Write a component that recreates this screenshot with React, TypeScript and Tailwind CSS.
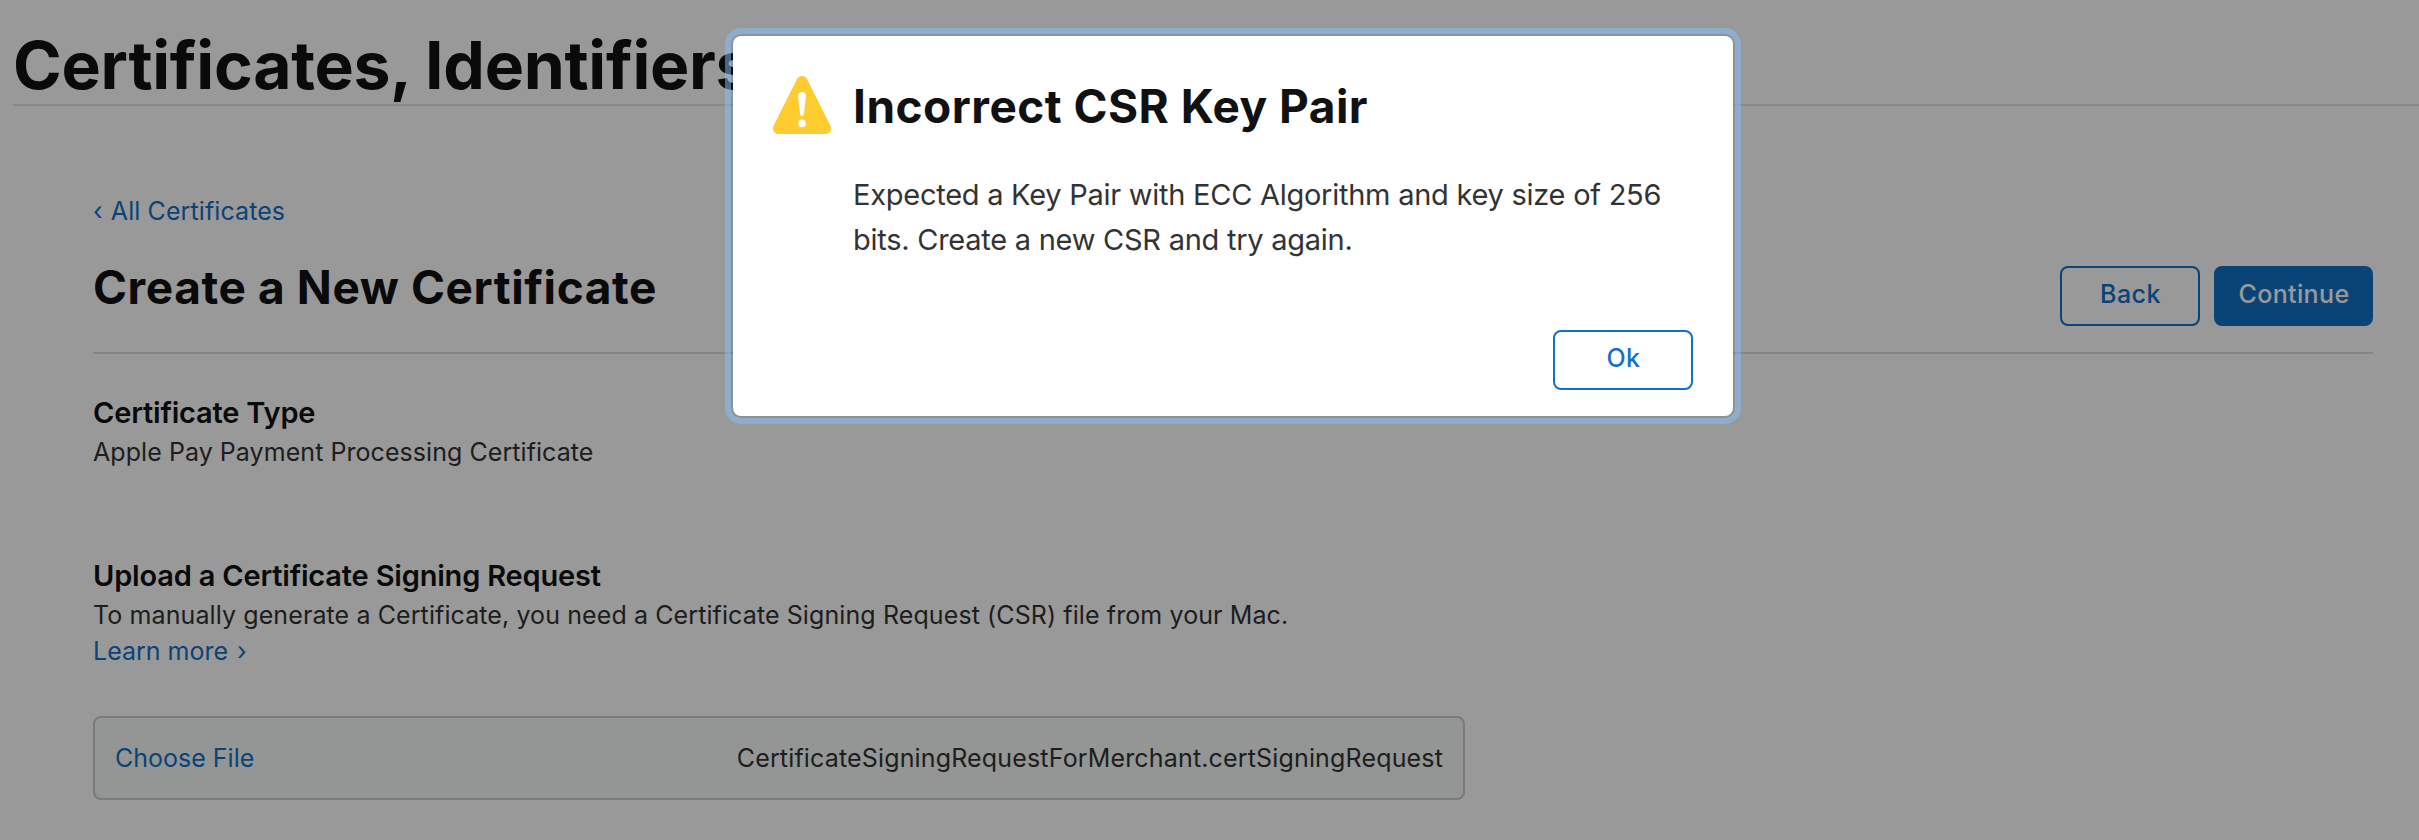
import type { ReactNode } from "react";

function WarningIcon() {
  return (
    <svg viewBox="0 0 58 58" className="h-[58px] w-[58px] shrink-0" aria-hidden="true">
      <path
        d="M24 3C26 -1 32 -1 34 3L57.1 49C59.4 53.6 56.8 58 52 58H6C1.2 58 -1.4 53.6 .9 49Z"
        fill="#ffcc2f"
      />
      <path d="M25 20C24.8 14.7 33.2 14.7 33 20L30.9 38.2C30.6 40.8 27.4 40.8 27.1 38.2Z" fill="#fff" />
      <circle cx="29" cy="47.4" r="3.8" fill="#fff" />
    </svg>
  );
}

function OutlineButton({ children }: { children: ReactNode }) {
  return (
    <button className="h-[60px] w-[140px] rounded-lg border-2 border-[#1271c5] pb-[2px] pl-px text-[25px] font-medium tracking-[0.5px] text-[#1271c5]">
      {children}
    </button>
  );
}

function Section({ title, children }: { title: string; children: ReactNode }) {
  return (
    <section>
      <h3 className="text-[29px] leading-[38px] font-semibold tracking-[-0.19px] text-[#111]">{title}</h3>
      <div className="mt-0.5 text-[25px] leading-9 text-[#333]">{children}</div>
    </section>
  );
}

function Dialog() {
  return (
    <div className="absolute inset-0 flex items-start bg-black/40 pt-9 pl-[733px]">
      <div
        role="dialog"
        className="flex h-[380px] w-[1000px] flex-col rounded-lg bg-white px-10 pt-10 pb-[26px] shadow-[0_0_0_2px_rgba(0,0,0,0.05)] outline-[6px] outline-offset-2 outline-[rgba(131,192,253,0.5)]"
      >
        <div className="flex gap-[21px]">
          <WarningIcon />
          <div className="pt-0.5">
            <h2 className="pl-px text-[46px] leading-[56px] font-bold tracking-[0.48px] text-[#111]">
              Incorrect CSR Key Pair
            </h2>
            <p className="mt-[38px] w-[830px] pl-px text-[29px] leading-[45px] tracking-[-0.26px] text-[#333]">
              Expected a Key Pair with ECC Algorithm and key size of 256
              <br />
              bits. Create a new CSR and try again.
            </p>
          </div>
        </div>
        <div className="mt-auto flex justify-end">
          <OutlineButton>Ok</OutlineButton>
        </div>
      </div>
    </div>
  );
}

export default function App() {
  return (
    <div className="relative h-[840px] w-full overflow-hidden bg-white font-['Inter',sans-serif]">
      <header className="ml-[13px] h-[106px] border-b-2 border-[#e5e5e5] pt-8">
        <h1 className="text-[66px] leading-[66px] font-bold tracking-[-0.3px] whitespace-nowrap text-[#111]">
          Certificates, Identifiers
        </h1>
      </header>

      <main className="mt-[87px] mr-[46px] ml-[93px]">
        <a className="block text-[25px] leading-9 tracking-[0.09px] text-[#1271c5]">
          <span className="mr-px">‹</span> All Certificates
        </a>

        <div className="flex h-[125px] items-start justify-between border-b-2 border-[#dedede]">
          <h2 className="mt-[30px] text-[46px] leading-[56px] font-bold tracking-[0.59px] text-[#111]">
            Create a New Certificate
          </h2>
          <div className="mt-[37px] flex gap-3.5">
            <OutlineButton>Back</OutlineButton>
            <button className="h-[60px] w-[159px] rounded-lg bg-[#1271c5] pb-[2px] pl-px text-[25px] font-medium tracking-[0.37px] text-white">
              Continue
            </button>
          </div>
        </div>

        <div className="mt-10 flex flex-col gap-[87px]">
          <Section title="Certificate Type">
            <p className="tracking-[0.06px]">Apple Pay Payment Processing Certificate</p>
          </Section>
          <Section title="Upload a Certificate Signing Request">
            <p className="tracking-[0.1px]">
              To manually generate a Certificate, you need a Certificate Signing Request (CSR) file from your Mac.
            </p>
            <a className="block text-[#1271c5]">
              Learn more <span className="ml-[2px]">›</span>
            </a>
          </Section>
        </div>

        <div className="mt-[47px] flex h-[84px] w-[1372px] items-center justify-between rounded-lg border-2 border-[#ccc] bg-[#f7faf8] pr-5 pl-5 text-[25px] leading-9">
          <span className="text-[#1271c5]">Choose File</span>
          <span className="tracking-[0.16px] text-[#333]">
            CertificateSigningRequestForMerchant.certSigningRequest
          </span>
        </div>
      </main>

      <Dialog />
    </div>
  );
}
